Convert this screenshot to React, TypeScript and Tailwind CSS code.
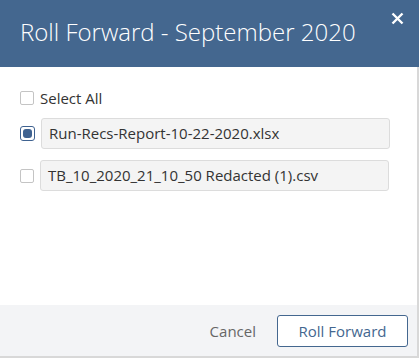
import React from "react";

function Check({ checked }: { checked?: boolean }) {
  if (checked) {
    return (
      <span className="w-[15px] h-[15px] shrink-0 rounded-[3px] border-[1.5px] border-[#3f6290] bg-white flex items-center justify-center">
        <span className="w-[9px] h-[9px] rounded-[3px] bg-[#3f6290]" />
      </span>
    );
  }
  return <span className="w-[14px] h-[14px] shrink-0 rounded-[2px] border border-[#c4c4c4] bg-white" />;
}

function FileRow({ name, checked }: { name: string; checked?: boolean }) {
  return (
    <div className="flex items-center gap-[6px]">
      <Check checked={checked} />
      <div className="w-[349px] h-[31px] rounded-[3px] border border-[#dcdcdc] bg-[#f4f4f4] px-[7px] flex items-center text-[15px] text-[#333]">
        {name}
      </div>
    </div>
  );
}

export default function App() {
  return (
    <div className="w-[419px] h-[358px] flex flex-col bg-white font-['Open_Sans',sans-serif]">
      {/* Header */}
      <div className="h-[67px] shrink-0 bg-[#44678f] flex items-start justify-between pl-[20px] pr-[15px]">
        <h1 className="mt-[17px] text-[24px] leading-[30px] text-white font-light">Roll Forward - September 2020</h1>
        <svg className="mt-[12px]" width="13" height="13" viewBox="0 0 13 13">
          <path d="M1.5 1.5 L11.5 11.5 M11.5 1.5 L1.5 11.5" stroke="white" strokeWidth="2.4" />
        </svg>
      </div>

      {/* Body */}
      <div className="flex-1 border-r-2 border-[#d8d8d8] pl-[20px] pt-[21px]">
        <label className="flex items-center gap-[6px] text-[15px] leading-[20px] text-[#333]">
          <Check />
          Select All
        </label>
        <div className="mt-[10px] flex flex-col gap-[11px]">
          <FileRow name="Run-Recs-Report-10-22-2020.xlsx" checked />
          <FileRow name="TB_10_2020_21_10_50 Redacted (1).csv" />
        </div>
      </div>

      {/* Footer */}
      <div className="h-[53px] shrink-0 bg-[#f3f4f6] border-r-2 border-b-2 border-[#d8d8d8] flex items-center justify-end gap-[21px] pr-[9px] pt-[1px]">
        <button className="text-[15px] text-[#666]">Cancel</button>
        <button className="w-[131px] h-[32px] rounded-[3px] border border-[#44678f] bg-white text-[15px] text-[#44678f]">
          Roll Forward
        </button>
      </div>
    </div>
  );
}
